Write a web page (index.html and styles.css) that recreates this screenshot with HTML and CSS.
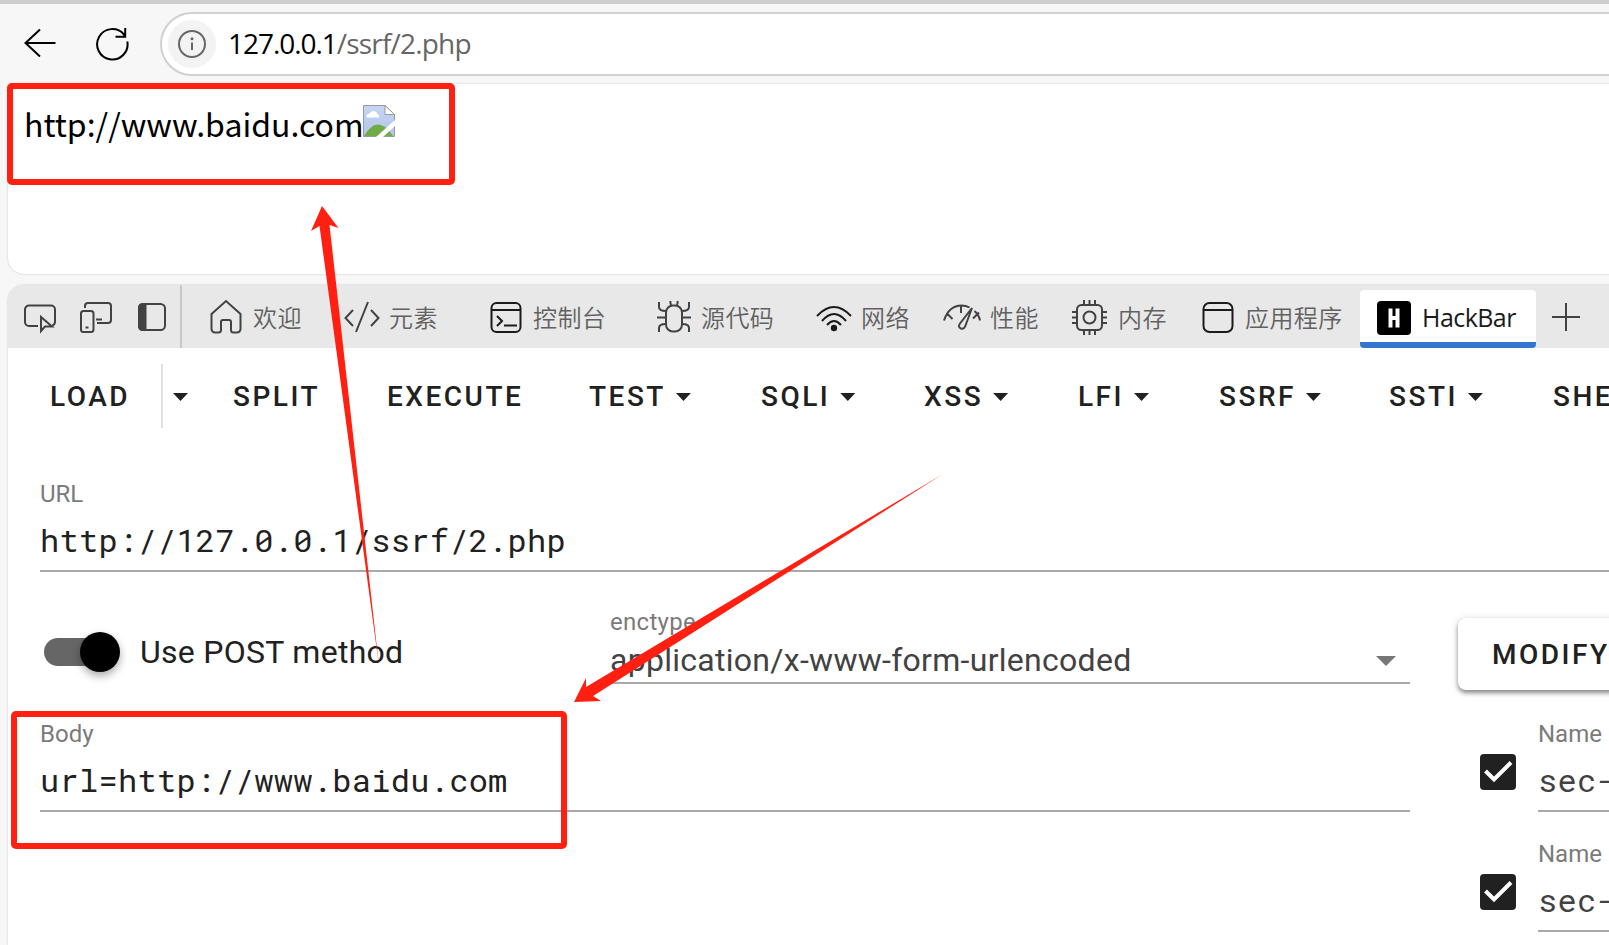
FILE: index.html
```html
<!DOCTYPE html>
<html lang="zh-CN">
<head>
<meta charset="utf-8">
<title>127.0.0.1/ssrf/2.php</title>
<link rel="stylesheet" href="styles.css">
</head>
<body>
<header class="toolbar">
  <svg class="nav-icon back" width="32" height="32" viewBox="0 0 32 32"><path d="M31.500 15H1.500M16 1.500L1.500 15L16 28.500"/></svg>
  <svg class="nav-icon reload" width="34" height="34" viewBox="0 0 34 34"><path d="M32.300 14.500A15.200 15.200 0 1 1 29 7.500L30 9.500M30.200 1V9.800H20.500"/></svg>
  <div class="address">
    <span class="info"><svg width="30" height="30" viewBox="0 0 30 30"><circle cx="15" cy="15" r="13"/><path d="M15 13.500V21"/><circle class="dot" cx="15" cy="9.700" r="1.500"/></svg></span>
    <span class="address-text">127.0.0.1<span class="path">/ssrf/2.php</span></span>
  </div>
</header>

<main class="page">
  <span class="page-text">http://www.baidu.com</span>
  <svg class="broken" width="32" height="32" viewBox="0 0 32 32">
    <defs><linearGradient id="sky" x2="0" y2="1"><stop offset="0" stop-color="#c5d5f5"/><stop offset="1" stop-color="#b3c4e8"/></linearGradient></defs>
    <path d="M.500 .500H22L31.500 9.500V31.500H.500Z" fill="url(#sky)" stroke="#9a9a9a"/>
    <path d="M4 12.500q-2-3 2.500-4q1-3 4.500-2.500q3 .5 3 3q3 .5 2 3.500Z" fill="#fff"/>
    <path d="M1 31Q8 19 15.500 19.500Q23 20 30 31Z" fill="#6fac46"/>
    <path d="M22 .500V9.500H31.500Z" fill="#fff" stroke="#9a9a9a"/>
    <path d="M13 32L32 15V21L20 32Z" fill="#fff"/>
  </svg>
</main>

<section class="devtools">
  <nav class="tabs">
    <div class="tools">
      <svg width="32" height="32" viewBox="0 0 32 32"><path d="M14 24H5a4 4 0 0 1-4-4V7.500a4 4 0 0 1 4-4H27a4 4 0 0 1 4 4V20a4 4 0 0 1-2.500 3.500M17 15V29L21 24.500H28Z"/></svg>
      <svg width="32" height="32" viewBox="0 0 32 32"><path d="M5 6V4a3 3 0 0 1 3-3H28a3 3 0 0 1 3 3V18a3 3 0 0 1-3 3H17M16 17.500H22M5.500 25.500H8.500"/><rect x="1" y="9" width="12.500" height="21" rx="2.500"/></svg>
      <svg width="28" height="32" viewBox="0 0 28 32"><rect x="1" y="2" width="26" height="26" rx="4.500"/><path class="solid" d="M5 2H7.500V28H5Q1 28 1 24V6Q1 2 5 2Z"/></svg>
    </div>
    <div class="tab welcome"><svg width="32" height="36" viewBox="0 0 32 36"><path d="M1.500 15L16 2L30.500 15V30a3.500 3.500 0 0 1-3.500 3.500H23.500Q21 33.500 21 31V23a2 2 0 0 0-2-2H13a2 2 0 0 0-2 2V31Q11 33.500 8.500 33.500H5A3.500 3.500 0 0 1 1.500 30Z"/></svg><span>欢迎</span></div>
    <div class="tab elements"><svg width="36" height="36" viewBox="0 0 36 36"><path d="M9 11L1.500 19L9 27M27 11L34.500 19L27 27M24 3L12 33"/></svg><span>元素</span></div>
    <div class="tab console"><svg class="dark" width="32" height="36" viewBox="0 0 32 36"><rect x="1.500" y="4" width="29" height="29" rx="5"/><path d="M1.500 11H30.500M7 17L12 22L7 27M14 26.500H27"/></svg><span>控制台</span></div>
    <div class="tab sources"><svg width="36" height="36" viewBox="0 0 36 36"><rect x="10" y="6.500" width="16" height="26" rx="7"/><path d="M14.500 2Q14 5 15.500 6M21.500 2Q22 5 20.500 6M3 3V8Q3 12 10 12M33 3V8Q33 12 26 12M1 18.500H10M26 18.500H35M10 25Q3 25 3 29V33M26 25Q33 25 33 29V33"/></svg><span>源代码</span></div>
    <div class="tab network"><svg class="dark" width="36" height="36" viewBox="0 0 36 36"><path d="M1 17Q18-1 35 17M6 22Q18 8 30 22M11 26Q18 18 25 26"/><circle class="solid" cx="18" cy="29" r="2.200"/></svg><span>网络</span></div>
    <div class="tab performance"><svg width="38" height="36" viewBox="0 0 38 36"><path d="M1 21.500Q6 6.500 18.500 6.500Q23 6.500 26.500 8.500M4 14.500L9.500 20M18 7V14M31.500 12Q36 16 37 21.500M36 13.500L30 19.500M29 9L22.500 26.500Q21 30.500 18 29.500Q14.500 28 17 24.500Z"/></svg><span>性能</span></div>
    <div class="tab memory"><svg width="36" height="36" viewBox="0 0 36 36"><rect x="6" y="6" width="25" height="25" rx="4.500"/><circle cx="18.500" cy="18.500" r="6"/><path d="M13 1V6M18.500 1V6M24 1V6M13 31V36M18.500 31V36M24 31V36M1 13H6M1 18.500H6M1 24H6M31 13H36M31 18.500H36M31 24H36"/></svg><span>内存</span></div>
    <div class="tab application"><svg class="dark" width="32" height="36" viewBox="0 0 32 36"><rect x="1.500" y="4" width="29" height="29" rx="6"/><path d="M1.500 11H30.500"/></svg><span>应用程序</span></div>
    <div class="tab hackbar"><svg width="34" height="34" viewBox="0 0 34 34"><rect class="logo" width="34" height="34" rx="4"/><path class="mark" d="M13.500 7.500V26.500M20.500 7.500V26.500M13.500 17H20.500"/></svg><span>HackBar</span></div>
    <svg class="plus" width="28" height="28" viewBox="0 0 28 28"><path d="M14 0V28M0 14H28"/></svg>
  </nav>

  <div class="actions">
    <button class="load">LOAD</button><button class="drop"><i class="caret"></i></button>
    <button class="split">SPLIT</button>
    <button class="execute">EXECUTE</button>
    <button class="test">TEST<i class="caret"></i></button>
    <button class="sqli">SQLI<i class="caret"></i></button>
    <button class="xss">XSS<i class="caret"></i></button>
    <button class="lfi">LFI<i class="caret"></i></button>
    <button class="ssrf">SSRF<i class="caret"></i></button>
    <button class="ssti">SSTI<i class="caret"></i></button>
    <button class="shell">SHE</button>
  </div>

  <div class="field url"><label>URL</label><div class="mono">http://127.0.0.1/ssrf/2.php</div></div>

  <div class="lower">
    <div class="request">
      <div class="options">
        <div class="switch"><span class="track"><span class="thumb"></span></span><span class="switch-label">Use POST method</span></div>
        <div class="select"><label>enctype</label><div class="select-value"><span>application/x-www-form-urlencoded</span><i class="caret"></i></div></div>
      </div>
      <div class="field"><label>Body</label><div class="mono">url=http://www.baidu.com</div></div>
    </div>
    <div class="headers">
      <button class="modify">MODIFY</button>
      <div class="header-row"><svg class="check" width="36" height="36" viewBox="0 0 36 36"><rect width="36" height="36" rx="4"/><path d="M5.500 17L14 25.500L31 8.500"/></svg><div class="field"><label>Name</label><div class="mono">sec-</div></div></div>
      <div class="header-row"><svg class="check" width="36" height="36" viewBox="0 0 36 36"><rect width="36" height="36" rx="4"/><path d="M5.500 17L14 25.500L31 8.500"/></svg><div class="field"><label>Name</label><div class="mono">sec-</div></div></div>
    </div>
  </div>
</section>

<svg class="annotations" width="1609" height="945" viewBox="0 0 1609 945">
  <rect x="10" y="86" width="442" height="96" rx="2"/>
  <rect x="14" y="714" width="550" height="132" rx="2"/>
  <path d="M322 206L338.500 228L329.500 225L379 666L319.500 226L311 231Z"/>
  <path d="M574 702L586 678V687L943 474L593 696L601 701Z"/>
</svg>
</body>
</html>
```
FILE: styles.css
```css
* { box-sizing: border-box; }
body { margin: 0; width: 1609px; height: 945px; overflow: hidden; background: #f7f7f7; color: #212121; font-family: Roboto, "Noto Sans CJK SC", sans-serif; }
svg { flex: none; fill: none; stroke: #424242; stroke-width: 2; display: block; }
button { border: 0; background: none; padding: 0; font: 500 28px/64px Roboto, sans-serif; letter-spacing: 2.500px; color: #212121; display: flex; align-items: center; flex: none; white-space: nowrap; }
.caret { flex: none; width: 15px; height: 8px; background: #212121; clip-path: polygon(0 0, 100% 0, 50% 100%); }

.toolbar { height: 84px; border-top: 4px solid #cdcdcd; padding-top: 8px; display: flex; align-items: flex-start; }
.nav-icon { stroke: #000; }
.back { margin: 16px 0 0 24px; }
.reload { margin: 15px 0 0 39px; }
.address { margin-left: 31px; width: 1500px; height: 64px; border: 2px solid #d0d0d0; border-radius: 32px; background: #fff; display: flex; align-items: center; padding-left: 6px; flex: none; }
.info { width: 48px; height: 48px; border-radius: 50%; background: #f3f3f3; display: grid; place-items: center; }
.info svg { stroke: #666; }
.info .dot { fill: #666; stroke: none; }
.address-text { margin: -2px 0 0 12px; font: 28px/40px "Open Sans", sans-serif; letter-spacing: -1.050px; font-kerning: none; color: #000; }
.path { color: #666; letter-spacing: -.8px; }

.page { margin-left: 8px; height: 190px; width: 1620px; background: #fff; border-radius: 0 0 0 16px; box-shadow: 0 0 2px #bbb; display: flex; align-items: flex-start; padding: 15px 0 0 16px; }
.page-text { font: 32px/48px "Noto Sans CJK SC", sans-serif; color: #000; width: 339px; white-space: nowrap; }
.broken { margin-top: 6px; stroke-width: 1; stroke: none; }

.devtools { margin: 11px 0 0 8px; height: 660px; width: 1620px; background: #fff; border-radius: 16px 0 0 0; box-shadow: 0 0 2px #bbb; overflow: hidden; }
.tabs { height: 63px; background: #e8e8e8; display: flex; }
.tools { width: 174px; border-right: 2px solid #c8c8ca; display: flex; padding: 17px 0 0 16px; gap: 24px; flex: none; }
.tools svg:last-child { margin-left: 2px; }
.tab { display: flex; align-items: flex-start; flex: none; padding-top: 14px; }
.tab span { font: 350 24px/36px "Noto Sans CJK SC", sans-serif; letter-spacing: .4px; color: #616161; margin-left: 11px; white-space: nowrap; }
.dark { stroke: #1b1b1b; }
.solid { fill: #424242; }
.dark .solid { fill: #1b1b1b; }
.welcome { width: 162px; padding-left: 28px; }
.elements { width: 146px; }
.elements span { margin-left: 9px; }
.console { width: 166px; }
.sources { width: 160px; }
.sources span { margin-left: 9px; }
.network { width: 127px; }
.network span { margin-left: 9px; }
.performance { width: 128px; }
.performance span { margin-left: 9px; }
.memory { width: 131px; }
.memory span { margin-left: 11px; }
.application { width: 158px; }
.application span { margin-left: 11px; }
.hackbar { width: 176px; height: 58px; margin-top: 5px; background: #fff; border-radius: 4px; border-bottom: 6px solid #3277cd; padding: 11px 0 0 17px; }
.hackbar span { font: 25px/33px "Open Sans", sans-serif; letter-spacing: -.55px; color: #1b1b1b; }
.logo { fill: #000; stroke: none; }
.mark { stroke: #fff; stroke-width: 4; }
.plus { margin: 18px 0 0 16px; }

.actions { display: flex; padding: 16px 0 0 42px; height: 80px; }
.actions button { padding-top: 2px; }
.actions .caret { margin-left: 10px; }
.actions .load { width: 111px; }
.actions .drop { width: 72px; border-left: 2px solid #e0e0e0; height: 64px; }
.split { width: 154px; }
.execute { width: 202px; }
.test { width: 172px; }
.sqli { width: 163px; }
.xss { width: 154px; }
.lfi { width: 141px; }
.ssrf { width: 170px; }
.ssti { width: 164px; }
.shell { width: 56px; overflow: hidden; }

label { display: block; font-size: 24px; line-height: 28px; color: #7b7b7b; }
.field { border-bottom: 2px solid #a9a9a9; height: 92px; }
.mono { font: 32px/40px "Roboto Mono", "DejaVu Sans Mono", monospace; letter-spacing: .28px; margin-top: 12px; white-space: nowrap; }
.url { margin: 52px 0 0 32px; }

.lower { display: flex; margin-left: 32px; }
.request { width: 1370px; flex: none; }
.options { display: flex; height: 148px; }
.switch { display: flex; width: 570px; padding: 60px 0 0 4px; height: 100px; align-items: center; }
.track { width: 72px; height: 28px; border-radius: 14px; background: #666; display: flex; align-items: center; justify-content: flex-end; }
.thumb { flex: none; width: 40px; height: 40px; border-radius: 50%; background: #000; margin-right: -4px; box-shadow: 0 4px 8px #0005; }
.switch-label { font-size: 32px; margin-left: 24px; letter-spacing: .28px; }
.select { width: 800px; height: 112px; padding-top: 36px; border-bottom: 2px solid #a9a9a9; }
.select label { letter-spacing: .28px; }
.select-value { display: flex; justify-content: space-between; align-items: center; height: 48px; padding-right: 14px; font-size: 32px; color: #424242; letter-spacing: .28px; }
.select .caret { width: 20px; height: 10px; background: #777; margin-top: 2px; }
.headers { width: 191px; flex: none; padding-left: 48px; }
.modify { margin: 46px 0 30px; width: 320px; height: 72px; padding: 2px 0 0 34px; border-radius: 8px; background: #fff; box-shadow: 0 3px 4px #0006, 0 1px 10px #0002; }
.header-row { display: flex; height: 120px; padding-left: 22px; }
.check { margin-top: 34px; fill: #212121; stroke: none; }
.check path { fill: none; stroke: #fff; stroke-width: 4; }
.header-row .field { margin-left: 22px; width: 300px; flex: none; }
.header-row .mono { color: #424242; }

.annotations { position: absolute; left: 0; top: 0; pointer-events: none; }
.annotations rect { stroke: #ff2012; stroke-width: 6; }
.annotations path { fill: #ff2012; stroke: none; }
```
